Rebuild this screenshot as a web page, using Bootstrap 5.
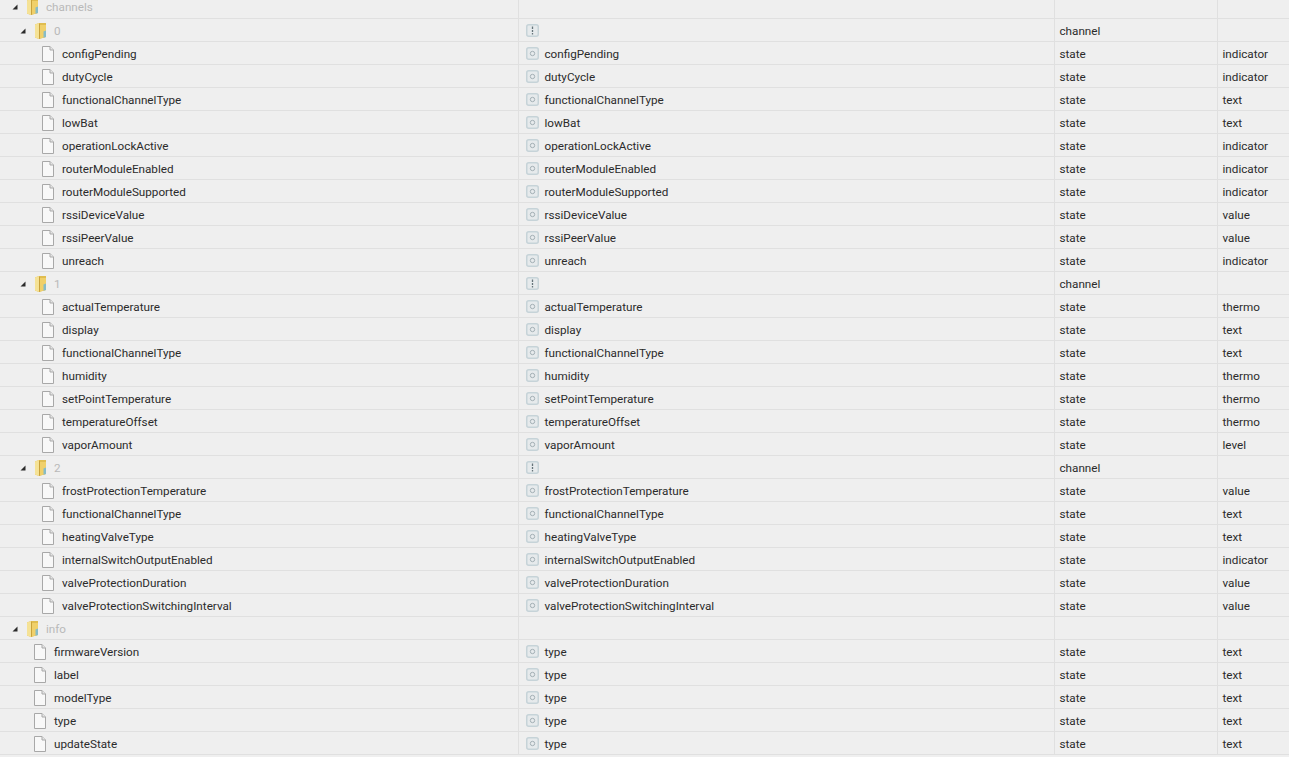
<!DOCTYPE html>
<html lang="de">
<head>
  <meta charset="UTF-8" />
  <meta name="viewport" content="width=device-width, initial-scale=1.0"/>
  <title>Objekte</title>
  <link href="https://cdn.jsdelivr.net/npm/bootstrap@5.3.0/dist/css/bootstrap.min.css" rel="stylesheet">
  <style>
    html, body { background: #efefef; overflow: hidden; }
    body { font-family: Roboto, "Liberation Sans", sans-serif; font-size: 11.7px; color: #2b2b2b; }
    .obj-table {
      --bs-table-bg: #efefef;
      --bs-table-color: #2b2b2b;
      --bs-table-border-color: #e0e0e0;
      table-layout: fixed;
      width: 1289px;
      margin: -5px 0 0 0;
    }
    .obj-table td {
      height: 23px;
      padding: 2px 5px 0;
      line-height: 20px;
      vertical-align: middle;
      white-space: nowrap;
      border-bottom: 1px solid #e0e0e0;
      border-right: 1px solid #e0e0e0;
    }
    .obj-table td:last-child { border-right: 0; }
    .obj-table .id-cell { padding: 2px 0 0; }
    .folder-name { color: #b9b9b9; }
    .tree-arrow { width: 6px; height: 6px; flex: none; }
    .tree-folder { width: 12px; height: 16px; flex: none; margin: 0 7px 0 9px; }
    .tree-file { width: 12px; height: 16px; flex: none; margin-right: 8px; }
    .role-icon { width: 13px; height: 13px; flex: none; margin: 0 6px 0 2px; }
    .lvl-0 { padding-left: 12px; }
    .lvl-1 { padding-left: 20px; }
    .file-1 { padding-left: 34px; }
    .file-2 { padding-left: 42px; }
  </style>
</head>
<body>
  <svg width="0" height="0" class="position-absolute">
    <symbol id="ico-arrow" viewBox="0 0 6 6"><path d="M5.5 0.5V5.5H0.5Z" fill="#2b2b2b"/></symbol>
    <symbol id="ico-folder" viewBox="0 0 12 16">
      <path d="M0 1.5 4 0H11V14L4 16 0 14.5Z" fill="#e0bd50"/>
      <path d="M0 1.5 4 0V16L0 14.5Z" fill="#f5e296"/>
      <path d="M4 0.5 5 1V15.6L4 16Z" fill="#c9a23c"/>
      <path d="M5 2H11V14L5 15.6Z" fill="#f0d06a"/>
      <path d="M8.5 8.5 11 7.5V14L8.5 14.7Z" fill="#86bcc8"/>
    </symbol>
    <symbol id="ico-file" viewBox="0 0 12 16">
      <path d="M.5 .5H8L11.5 4V15.5H.5Z" fill="#f8f8f8" stroke="#a8a8a8"/>
      <path d="M8 .5V4H11.5" fill="#e6e6e6" stroke="#a8a8a8"/>
    </symbol>
    <symbol id="ico-state" viewBox="0 0 13 13">
      <rect x=".75" y=".75" width="11.5" height="11.5" rx="2" fill="#e6eaec" stroke="#c6d3d8" stroke-width="1.5"/>
      <circle cx="6.5" cy="6.5" r="2.2" fill="none" stroke="#a4b0b5"/>
    </symbol>
    <symbol id="ico-channel" viewBox="0 0 13 13">
      <rect x=".75" y=".75" width="11.5" height="11.5" rx="2" fill="#e6eaec" stroke="#c6d3d8" stroke-width="1.5"/>
      <path d="M6.5 2.5V5M6.5 6V8M6.5 9V10.5" stroke="#66747a" stroke-width="1.3"/>
    </symbol>
  </svg>

  <table class="table obj-table mb-0">
    <colgroup>
      <col style="width: 518px"><col style="width: 536px"><col style="width: 163px"><col>
    </colgroup>
    <tbody id="filas"></tbody>
  </table>

  <script>
    const canales = [
      ['0', [
        ['configPending', 'indicator'], ['dutyCycle', 'indicator'], ['functionalChannelType', 'text'],
        ['lowBat', 'text'], ['operationLockActive', 'indicator'], ['routerModuleEnabled', 'indicator'],
        ['routerModuleSupported', 'indicator'], ['rssiDeviceValue', 'value'], ['rssiPeerValue', 'value'],
        ['unreach', 'indicator']
      ]],
      ['1', [
        ['actualTemperature', 'thermo'], ['display', 'text'], ['functionalChannelType', 'text'],
        ['humidity', 'thermo'], ['setPointTemperature', 'thermo'], ['temperatureOffset', 'thermo'],
        ['vaporAmount', 'level']
      ]],
      ['2', [
        ['frostProtectionTemperature', 'value'], ['functionalChannelType', 'text'], ['heatingValveType', 'text'],
        ['internalSwitchOutputEnabled', 'indicator'], ['valveProtectionDuration', 'value'],
        ['valveProtectionSwitchingInterval', 'value']
      ]]
    ];
    const info = ['firmwareVersion', 'label', 'modelType', 'type', 'updateState'];

    const usar = (id, clase) => `<svg class="${clase}"><use href="#${id}"/></svg>`;

    function carpeta(nombre, nivel, icono, tipo) {
      const rol = icono ? `<div class="d-flex align-items-center">${usar(icono, 'role-icon')}</div>` : '';
      return `<tr>
        <td class="id-cell"><div class="d-flex align-items-center lvl-${nivel}">
          ${usar('ico-arrow', 'tree-arrow')}${usar('ico-folder', 'tree-folder')}<span class="folder-name">${nombre}</span>
        </div></td>
        <td>${rol}</td><td>${tipo}</td><td></td></tr>`;
    }

    function estado(nombre, titulo, rol, nivel) {
      return `<tr>
        <td class="id-cell"><div class="d-flex align-items-center file-${nivel}">
          ${usar('ico-file', 'tree-file')}<span>${nombre}</span>
        </div></td>
        <td><div class="d-flex align-items-center">${usar('ico-state', 'role-icon')}<span>${titulo}</span></div></td>
        <td>state</td><td>${rol}</td></tr>`;
    }

    let html = carpeta('channels', 0, '', '');
    canales.forEach(([id, estados]) => {
      html += carpeta(id, 1, 'ico-channel', 'channel');
      estados.forEach(([n, r]) => { html += estado(n, n, r, 2); });
    });
    html += carpeta('info', 0, '', '');
    info.forEach(n => { html += estado(n, 'type', 'text', 1); });
    document.getElementById('filas').innerHTML = html;
  </script>
  <script src="https://cdn.jsdelivr.net/npm/bootstrap@5.3.0/dist/js/bootstrap.bundle.min.js"></script>
</body>
</html>
